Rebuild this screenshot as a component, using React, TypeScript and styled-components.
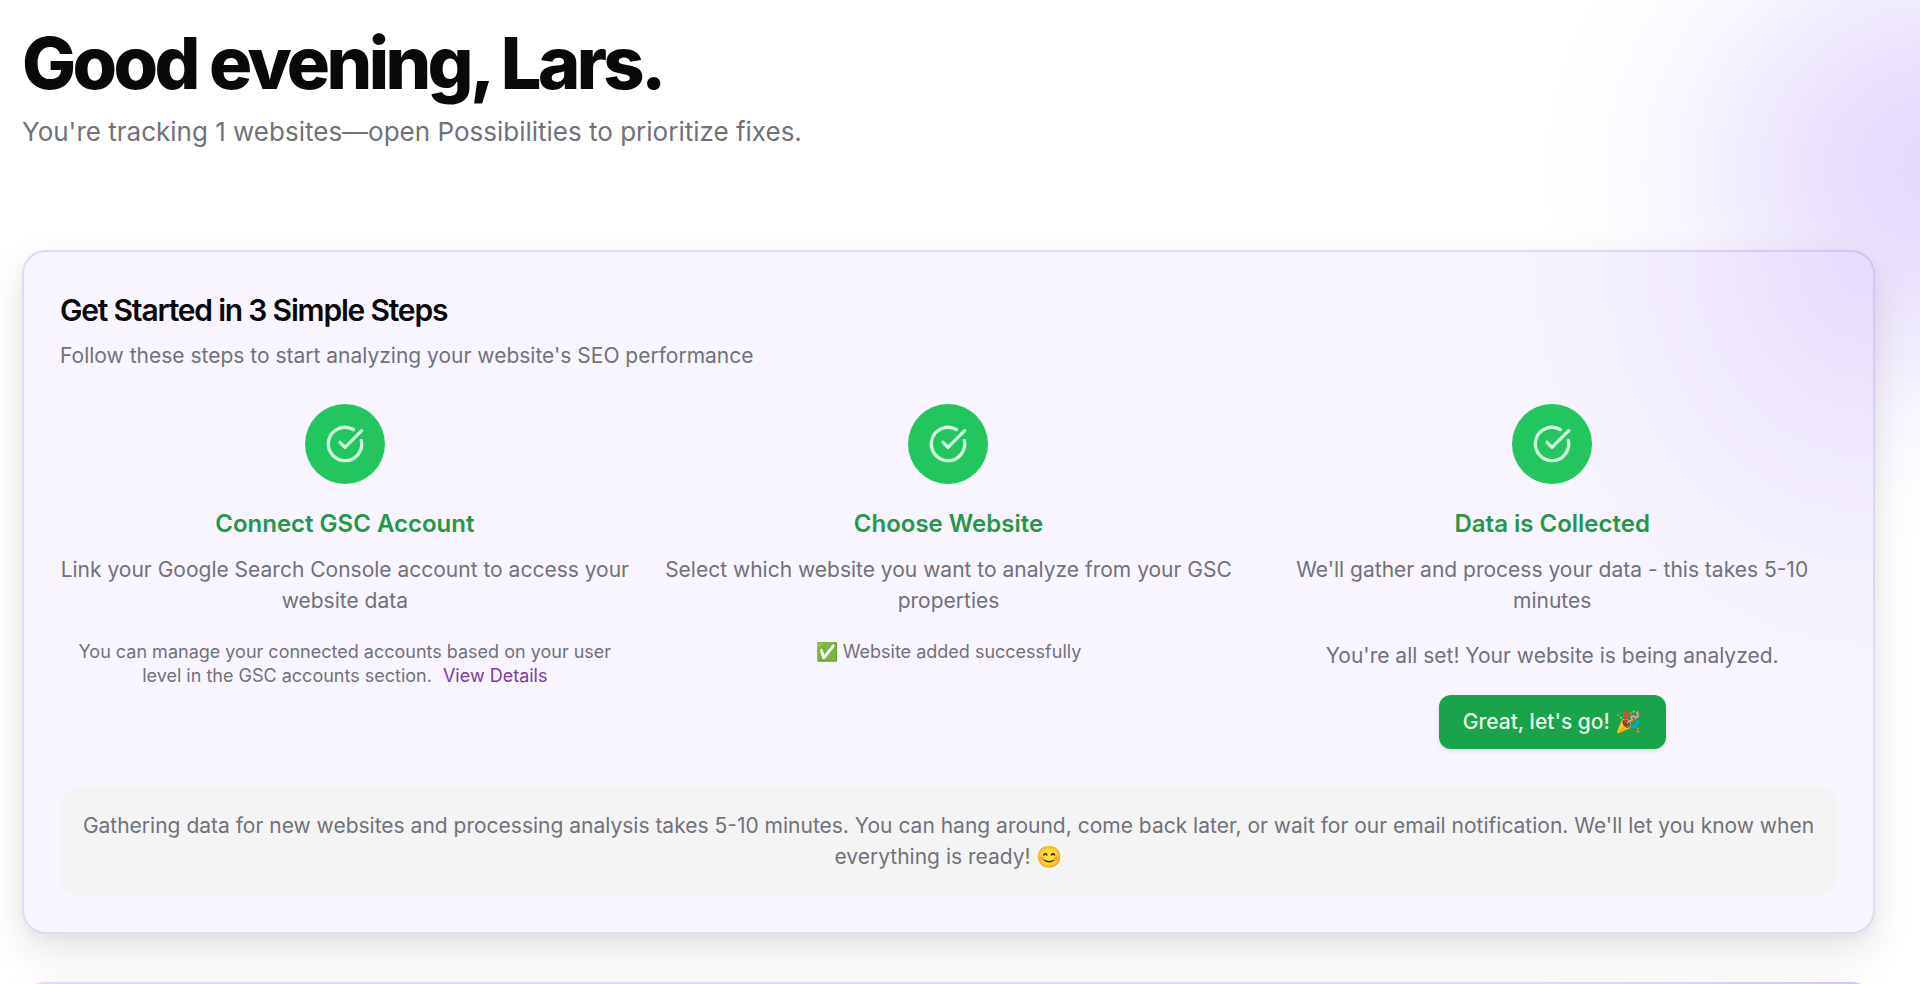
import React from "react";
import styled, { createGlobalStyle } from "styled-components";
import { CircleCheckBig } from "lucide-react";

const GlobalStyle = createGlobalStyle`
  *, *::before, *::after { box-sizing: border-box; }
  html, body { margin: 0; }
  body {
    background: #ffffff;
    color: #09090b;
    font-family: Inter, "Liberation Sans", sans-serif;
    font-size: 21px;
    line-height: 31px;
  }
  h1, h2, h3, p { margin: 0; }
  #root { overflow: hidden; height: 100vh; }
`;

const Page = styled.main`
  min-height: 100vh;
  padding: 24px 45px 0 22px;
  background: radial-gradient(
    ellipse 400px 370px at calc(100% + 20px) 170px,
    #e4dafd 0%,
    #e6dcfd 15%,
    #ebe3fd 32%,
    #f2edfe 50%,
    #f9f7ff 68%,
    #fdfdff 86%,
    #ffffff 100%
  ) no-repeat;
`;

const Header = styled.header`
  margin-bottom: 100px;
`;

const Greeting = styled.h1`
  font-size: 72px;
  font-weight: 800;
  line-height: 78px;
  letter-spacing: -0.05em;
`;

const Summary = styled.p`
  margin-top: 12px;
  font-size: 26px;
  line-height: 36px;
  color: #71717a;
`;

const Card = styled.section`
  margin-bottom: 48px;
  padding: 36px;
  border: 2px solid rgba(150, 90, 190, 0.18);
  border-radius: 24px;
  background:
    radial-gradient(
      ellipse 380px 440px at 100% 0,
      #e5dafd 0%,
      #ebe3fd 25%,
      #f1ebfe 50%,
      #f5f1fe 75%,
      #f8f5fe 100%
    ) no-repeat border-box,
    #f8f5fe;
  box-shadow: 0 16px 40px rgba(0, 0, 0, 0.11), 0 4px 10px rgba(0, 0, 0, 0.04);
`;

const CardTitle = styled.h2`
  font-size: 30px;
  font-weight: 600;
  line-height: 44px;
  letter-spacing: -0.04em;
`;

const CardIntro = styled.p`
  margin-top: 8px;
  color: #71717a;
`;

const Steps = styled.ol`
  display: grid;
  grid-template-columns: repeat(3, minmax(0, 1fr));
  gap: 34px;
  margin: 33px 0 37px;
  padding: 0;
  list-style: none;
`;

const Step = styled.li`
  display: flex;
  flex-direction: column;
  align-items: center;
  text-align: center;
  color: #71717a;
`;

const StepBadge = styled.span`
  display: flex;
  align-items: center;
  justify-content: center;
  width: 80px;
  height: 80px;
  border-radius: 50%;
  background: #22c55e;
  color: #d3fbe2;
`;

const StepTitle = styled.h3`
  margin: 24px 0 14px;
  font-size: 24px;
  font-weight: 600;
  line-height: 32px;
  color: #27964b;
`;

const StepNote = styled.p<{ $small?: boolean }>`
  margin-top: 24px;
  font-size: ${(p) => (p.$small ? 18 : 21)}px;
  line-height: ${(p) => (p.$small ? 24 : 31)}px;
`;

const DetailsLink = styled.a`
  margin-left: 6px;
  color: #7e3a9c;
  text-decoration: none;
`;

const GoButton = styled.button`
  margin-top: 24px;
  height: 54px;
  padding: 0 24px;
  border: 0;
  border-radius: 12px;
  background: #19a34a;
  color: #e9fdf0;
  font: 500 21px/30px Inter, "Liberation Sans", sans-serif;
  box-shadow: 0 2px 4px rgba(0, 0, 0, 0.1);
  cursor: pointer;
`;

const Notice = styled.p`
  padding: 24px 20px;
  border-radius: 20px;
  background: #f4f4f5;
  text-align: center;
  color: #71717a;
`;

const Badge = () => (
  <StepBadge>
    <CircleCheckBig size={40} strokeWidth={2} aria-hidden />
  </StepBadge>
);

export default function App() {
  return (
    <>
      <GlobalStyle />
      <Page>
        <Header>
          <Greeting>Good evening, Lars.</Greeting>
          <Summary>You're tracking 1 websites—open Possibilities to prioritize fixes.</Summary>
        </Header>
        <Card>
          <CardTitle>Get Started in 3 Simple Steps</CardTitle>
          <CardIntro>Follow these steps to start analyzing your website's SEO performance</CardIntro>
          <Steps>
            <Step>
              <Badge />
              <StepTitle>Connect GSC Account</StepTitle>
              <p>Link your Google Search Console account to access your website data</p>
              <StepNote $small>
                You can manage your connected accounts based on your user level in the GSC accounts section.{" "}
                <DetailsLink href="#details">View Details</DetailsLink>
              </StepNote>
            </Step>
            <Step>
              <Badge />
              <StepTitle>Choose Website</StepTitle>
              <p>Select which website you want to analyze from your GSC properties</p>
              <StepNote $small>✅ Website added successfully</StepNote>
            </Step>
            <Step>
              <Badge />
              <StepTitle>Data is Collected</StepTitle>
              <p>We'll gather and process your data - this takes 5-10 minutes</p>
              <StepNote>You're all set! Your website is being analyzed.</StepNote>
              <GoButton type="button">Great, let's go! 🎉</GoButton>
            </Step>
          </Steps>
          <Notice>
            Gathering data for new websites and processing analysis takes 5-10 minutes. You can hang around, come back
            later, or wait for our email notification. We'll let you know when everything is ready! 😊
          </Notice>
        </Card>
        <Card />
      </Page>
    </>
  );
}
